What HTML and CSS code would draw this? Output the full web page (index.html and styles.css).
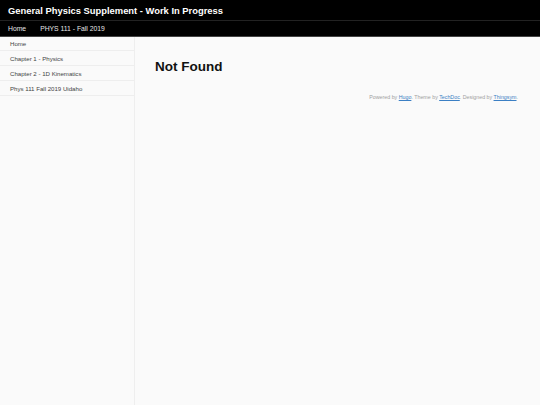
FILE: index.html
```html
<!DOCTYPE html>
<html>
<head>
<meta charset="utf-8">
<link rel="stylesheet" href="styles.css">
</head>
<body>
<header class="site-header">
  <div class="title-bar"><span class="site-title">General Physics Supplement - Work In Progress</span></div>
  <nav class="global-nav">
    <a href="#">Home</a>
    <a href="#">PHYS 111 - Fall 2019</a>
  </nav>
</header>
<div class="layout">
  <aside class="sidebar">
    <ul class="side-menu">
      <li><a href="#">Home</a></li>
      <li><a href="#">Chapter 1 - Physics</a></li>
      <li><a href="#">Chapter 2 - 1D Kinematics</a></li>
      <li><a href="#">Phys 111 Fall 2019 Uidaho</a></li>
    </ul>
  </aside>
  <main class="content">
    <h1 class="page-title">Not Found</h1>
    <footer class="site-footer">Powered by <a href="#">Hugo</a>. Theme by <a href="#">TechDoc</a>. Designed by <a href="#">Thingsym</a>.</footer>
  </main>
</div>
</body>
</html>
```
FILE: styles.css
```css
html, body {
  margin: 0;
  padding: 0;
  height: 100%;
}
body {
  font-family: "Liberation Sans", Arial, sans-serif;
  background: #fafafa;
  color: #222;
}
.site-header {
  background: #000;
  border-bottom: 1px solid #444;
}
.title-bar {
  height: 20px;
  padding: 0 8px;
  display: flex;
  align-items: center;
  border-bottom: 1px solid #222;
}
.site-title {
  color: #fff;
  font-weight: bold;
  font-size: 9.4px;
}
.global-nav {
  height: 15px;
  padding: 0 8px;
  display: flex;
  align-items: center;
  gap: 14px;
}
.global-nav a {
  color: #e6e6e6;
  font-size: 6.8px;
  text-decoration: none;
}
.layout {
  display: flex;
  min-height: calc(100% - 37px);
}
.sidebar {
  width: 134px;
  flex: none;
  border-right: 1px solid #eee;
}
.side-menu {
  list-style: none;
  margin: 0;
  padding: 0;
}
.side-menu li {
  height: 14px;
  border-bottom: 1px solid #eee;
  display: flex;
  align-items: center;
  padding-left: 10px;
}
.side-menu li:first-child {
  height: 13px;
}
.side-menu a {
  color: #444;
  font-size: 6.1px;
  text-decoration: none;
}
.content {
  flex: 1;
  padding: 20px 22px 0 20px;
}
.page-title {
  margin: 0;
  font-size: 13.5px;
  font-weight: bold;
  color: #111;
  line-height: 20px;
}
.site-footer {
  margin-top: 17px;
  text-align: right;
  font-size: 5.3px;
  color: #a0a0a0;
}
.site-footer a {
  color: #3b7fc4;
}
```
